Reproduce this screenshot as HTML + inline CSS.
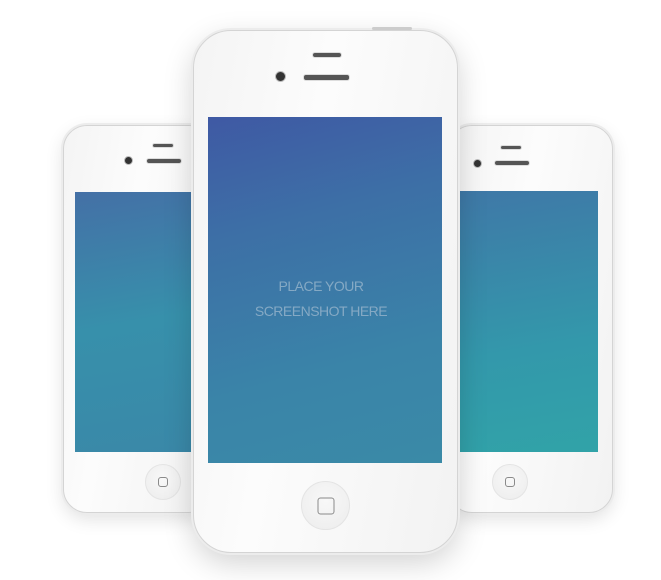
<!DOCTYPE html>
<html><head><style>
body{margin:0;width:661px;height:580px;background:#fff;position:relative;overflow:hidden;font-family:"Liberation Sans",sans-serif}
.ph{position:absolute;background:linear-gradient(100deg,#f4f4f4,#fcfcfc 40%,#f2f2f2);border:1px solid #d4d4d4;box-shadow:0 0 0 2px #ececec,0 6px 18px rgba(0,0,0,.12);box-sizing:border-box}
.scr{position:absolute}
.hb{position:absolute;border-radius:50%;background:radial-gradient(circle at 50% 40%,#f8f8f8,#ececec);border:1px solid #e4e4e4;box-sizing:border-box}
.hb i{position:absolute;left:50%;top:50%;border:1.5px solid #8a8a8a;border-radius:3px;box-sizing:border-box;transform:translate(-50%,-50%)}
.cam{position:absolute;border-radius:50%;background:#333;border:1px solid #bbb}
.sp{position:absolute;background:#555;border-radius:3px;border:1px solid #ddd}
</style></head><body>
<!-- left -->
<div class="ph" style="left:63px;top:125px;width:150px;height:388px;border-radius:24px"></div>
<div class="scr" style="left:75px;top:192px;width:125px;height:260px;background:linear-gradient(170deg,#4470a6,#3790ab 50%,#3a88a8)"></div>
<div class="cam" style="left:124px;top:156px;width:7px;height:7px"></div>
<div class="sp" style="left:146px;top:158px;width:34px;height:4px"></div>
<div class="sp" style="left:152px;top:143px;width:20px;height:3px"></div>
<div class="hb" style="left:145px;top:464px;width:36px;height:36px"><i style="width:10px;height:10px"></i></div>
<!-- right -->
<div class="ph" style="left:448px;top:125px;width:165px;height:388px;border-radius:24px"></div>
<div class="scr" style="left:455px;top:191px;width:143px;height:261px;background:linear-gradient(170deg,#3f78a7,#3398ab 60%,#31a3a8)"></div>
<div class="cam" style="left:473px;top:159px;width:7px;height:7px"></div>
<div class="sp" style="left:494px;top:160px;width:34px;height:4px"></div>
<div class="sp" style="left:500px;top:145px;width:20px;height:3px"></div>
<div class="hb" style="left:492px;top:464px;width:36px;height:36px"><i style="width:10px;height:10px"></i></div>
<!-- center -->
<div class="ph" style="left:193px;top:30px;width:265px;height:523px;border-radius:38px;box-shadow:0 0 0 2px #ececec,0 10px 30px rgba(0,0,0,.18)"></div>
<div style="position:absolute;left:372px;top:27px;width:40px;height:3px;background:#ccc;border-radius:2px"></div>
<div class="scr" style="left:208px;top:117px;width:234px;height:346px;background:linear-gradient(165deg,#3f59a4,#3d6fa6 30%,#3a84a8 70%,#3a8aa7)"></div>
<div class="cam" style="left:275px;top:71px;width:9px;height:9px"></div>
<div class="sp" style="left:303px;top:74px;width:45px;height:5px;background:#555"></div>
<div class="sp" style="left:312px;top:52px;width:28px;height:4px"></div>
<div class="hb" style="left:301px;top:481px;width:49px;height:49px"><i style="width:17px;height:17px"></i></div>
<div style="position:absolute;left:204px;top:274px;width:234px;text-align:center;color:#85a9c4;font-size:14px;line-height:25px;letter-spacing:-.5px">PLACE YOUR<br>SCREENSHOT HERE</div>
</body></html>
